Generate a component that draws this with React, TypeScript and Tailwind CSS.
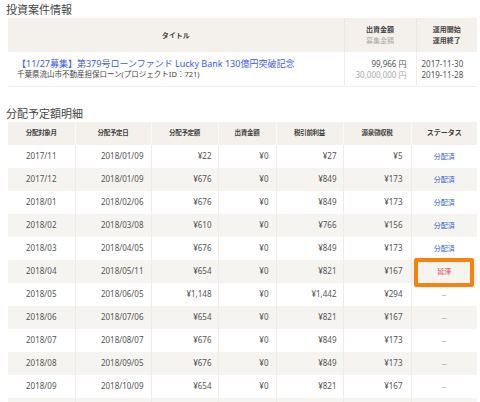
const rows = [
  { month: "2017/11", date: "2018/01/09", amount: "¥22", invest: "¥0", profit: "¥27", tax: "¥5", status: "paid" },
  { month: "2017/12", date: "2018/01/09", amount: "¥676", invest: "¥0", profit: "¥849", tax: "¥173", status: "paid" },
  { month: "2018/01", date: "2018/02/06", amount: "¥676", invest: "¥0", profit: "¥849", tax: "¥173", status: "paid" },
  { month: "2018/02", date: "2018/03/08", amount: "¥610", invest: "¥0", profit: "¥766", tax: "¥156", status: "paid" },
  { month: "2018/03", date: "2018/04/05", amount: "¥676", invest: "¥0", profit: "¥849", tax: "¥173", status: "paid" },
  { month: "2018/04", date: "2018/05/11", amount: "¥654", invest: "¥0", profit: "¥821", tax: "¥167", status: "late" },
  { month: "2018/05", date: "2018/06/05", amount: "¥1,148", invest: "¥0", profit: "¥1,442", tax: "¥294", status: "none" },
  { month: "2018/06", date: "2018/07/06", amount: "¥654", invest: "¥0", profit: "¥821", tax: "¥167", status: "none" },
  { month: "2018/07", date: "2018/08/07", amount: "¥676", invest: "¥0", profit: "¥849", tax: "¥173", status: "none" },
  { month: "2018/08", date: "2018/09/05", amount: "¥676", invest: "¥0", profit: "¥849", tax: "¥173", status: "none" },
  { month: "2018/09", date: "2018/10/09", amount: "¥654", invest: "¥0", profit: "¥821", tax: "¥167", status: "none" },
];

const heads = ["分配対象月", "分配予定日", "分配予定額", "出資金額", "税引前利益", "源泉徴収税", "ステータス"];
const widths = [67, 76, 67, 58, 67, 68, 66];

function Status({ value }: { value: string }) {
  if (value === "paid") return <span className="text-[7px] text-[#2d5be3]">分配済</span>;
  if (value === "late")
    return (
      <>
        <span className="text-[7px] text-[#e0464b]">延滞</span>
        <span className="pointer-events-none absolute top-[-2px] right-[3px] bottom-[-4px] left-[2px] rounded-[2px] border-4 border-[#f7830d]" />
      </>
    );
  return <span className="text-[7px] text-[#888]">--</span>;
}

export default function App() {
  return (
    <div className="h-[402px] overflow-hidden bg-white font-['Noto_Sans','Noto_Sans_CJK_JP',sans-serif] text-[#555]">
      <h2 className="pl-[6px] pt-[2px] text-[11px] leading-[16px] font-normal text-[#444]">投資案件情報</h2>

      <table className="ml-[8px] w-[469px] table-fixed border-collapse">
        <colgroup>
          <col className="w-[336px]" />
          <col className="w-[72px]" />
          <col className="w-[61px]" />
        </colgroup>
        <thead>
          <tr className="h-[34px] bg-[#f4f1ec] text-center text-[7px] leading-[11px] font-bold text-[#444]">
            <th className="border-r border-[#e9e5df] font-bold">タイトル</th>
            <th className="border-r border-[#e9e5df] font-bold">
              <div>出資金額</div>
              <div className="font-normal text-[#aaa]">募集金額</div>
            </th>
            <th className="font-bold">
              <div>運用開始</div>
              <div>運用終了</div>
            </th>
          </tr>
        </thead>
        <tbody>
          <tr className="h-[34px] border-b border-[#f0ede8] leading-[11px]">
            <td className="border-r border-[#f0ede8] pl-[9px]">
              <div className="text-[9px] text-[#3a5de8]">【11/27募集】第379号ローンファンド Lucky Bank 130億円突破記念</div>
              <div className="text-[7.5px] text-[#444]">千葉県流山市不動産担保ローン(プロジェクトID：721)</div>
            </td>
            <td className="border-r border-[#f0ede8] pr-[9px] text-right text-[8px]">
              <div className="text-[#555]">99,966 円</div>
              <div className="text-[#aaa]">30,000,000 円</div>
            </td>
            <td className="pl-[5px] text-[8px] text-[#555]">
              <div>2017-11-30</div>
              <div>2019-11-28</div>
            </td>
          </tr>
        </tbody>
      </table>

      <h2 className="mt-[18px] pl-[6px] text-[11px] leading-[17px] font-normal text-[#444]">分配予定額明細</h2>

      <table className="ml-[8px] w-[469px] table-fixed border-collapse">
        <colgroup>
          {widths.map((w, i) => (
            <col key={i} style={{ width: w }} />
          ))}
        </colgroup>
        <thead>
          <tr className="h-[23px] bg-[#f4f1ec] text-[6.5px] text-[#3f3f3f]">
            {heads.map((h, i) => (
              <th
                key={h}
                className={i < 6 ? "border-r border-[#fbfaf8] font-bold tracking-[-0.3px]" : "text-[7px] font-bold"}
              >
                {h}
              </th>
            ))}
          </tr>
        </thead>
        <tbody>
          {rows.map((r, i) => (
            <tr key={r.month} className={`h-[23px] text-[8px] ${i % 2 === 1 ? "bg-[#f6f4f0]" : "bg-white"}`}>
              <td className="border-r border-[#efece7] text-center">{r.month}</td>
              <td className="border-r border-[#efece7] pr-[7px] text-right">{r.date}</td>
              <td className="border-r border-[#efece7] pr-[6px] text-right">{r.amount}</td>
              <td className="border-r border-[#efece7] pr-[7px] text-right">{r.invest}</td>
              <td className="border-r border-[#efece7] pr-[6px] text-right">{r.profit}</td>
              <td className="border-r border-[#efece7] pr-[8px] text-right">{r.tax}</td>
              <td className="relative text-center">
                <Status value={r.status} />
              </td>
            </tr>
          ))}
          <tr className="h-[23px] bg-[#f6f4f0]">
            {widths.map((_, i) => (
              <td key={i} className={i < 6 ? "border-r border-[#efece7]" : ""} />
            ))}
          </tr>
        </tbody>
      </table>
    </div>
  );
}
